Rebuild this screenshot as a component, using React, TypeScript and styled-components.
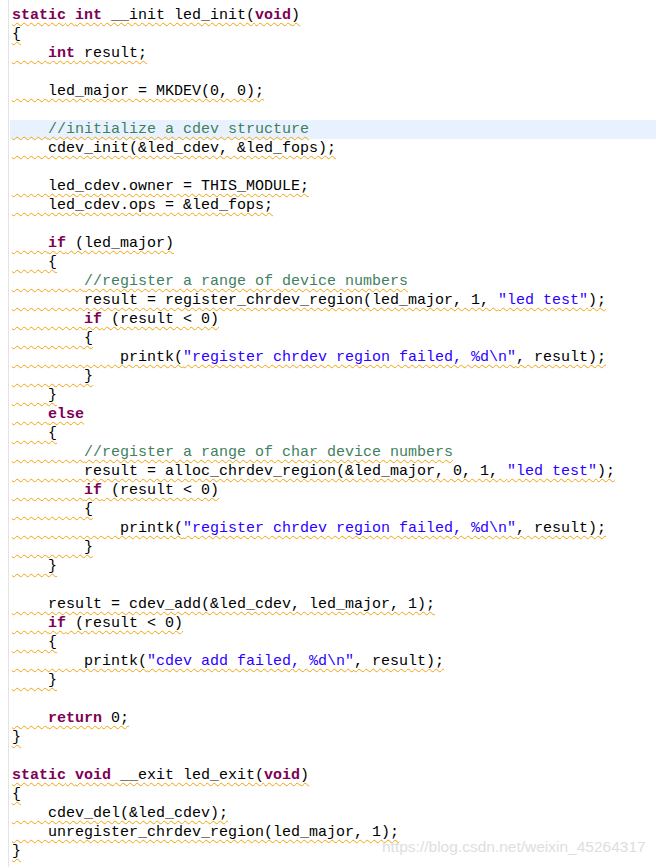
import React from "react"
import styled, { createGlobalStyle } from "styled-components"

const GlobalStyle = createGlobalStyle`
  html, body {
    margin: 0;
    padding: 0;
    background: #ffffff;
  }
`

const EditorFrame = styled.div`
  position: relative;
  width: 656px;
  height: 867px;
  overflow: hidden;
  background: #ffffff;
`

const Gutter = styled.div`
  margin-left: 8px;
  height: 100%;
  border-left: 1px solid #e4e4e4;
  padding-top: 6px;
  box-sizing: border-box;
`

const CodeLine = styled.div<{ $current?: boolean }>`
  height: 19px;
  line-height: 19px;
  margin-left: 1px;
  padding-left: 2px;
  white-space: pre;
  font-family: "Liberation Mono", "DejaVu Sans Mono", monospace;
  font-size: 15px;
  color: #000000;
  background: ${(p) => (p.$current ? "#e8f2fe" : "transparent")};
`

const Squiggle = styled.span`
  text-decoration-line: underline;
  text-decoration-style: wavy;
  text-decoration-color: #f2a30c;
  text-decoration-thickness: 0.7px;
  text-underline-offset: 3px;
`

const Keyword = styled.span`
  color: #7f0055;
  font-weight: bold;
`

const StringLit = styled.span`
  color: #2a00ff;
`

const Comment = styled.span`
  color: #3f7f5f;
`

const Watermark = styled.div`
  position: absolute;
  left: 382px;
  top: 838px;
  font-family: "Liberation Sans", Arial, sans-serif;
  font-size: 15.5px;
  color: #dedede;
  white-space: nowrap;
`

const source = `static int __init led_init(void)
{
    int result;

    led_major = MKDEV(0, 0);

    //initialize a cdev structure
    cdev_init(&led_cdev, &led_fops);

    led_cdev.owner = THIS_MODULE;
    led_cdev.ops = &led_fops;

    if (led_major)
    {
        //register a range of device numbers
        result = register_chrdev_region(led_major, 1, "led test");
        if (result < 0)
        {
            printk("register chrdev region failed, %d\\n", result);
        }
    }
    else
    {
        //register a range of char device numbers
        result = alloc_chrdev_region(&led_major, 0, 1, "led test");
        if (result < 0)
        {
            printk("register chrdev region failed, %d\\n", result);
        }
    }

    result = cdev_add(&led_cdev, led_major, 1);
    if (result < 0)
    {
        printk("cdev add failed, %d\\n", result);
    }

    return 0;
}

static void __exit led_exit(void)
{
    cdev_del(&led_cdev);
    unregister_chrdev_region(led_major, 1);
}`

const CURRENT_LINE = 6

const tokenRe = /("(?:[^"\\]|\\.)*")|\b(static|int|void|if|else|return)\b/g

function highlight(line: string) {
  const trimmed = line.trimStart()
  if (trimmed.startsWith("//")) {
    const indent = line.slice(0, line.length - trimmed.length)
    return [indent, <Comment key="c">{trimmed}</Comment>]
  }
  const parts: React.ReactNode[] = []
  let last = 0
  let m: RegExpExecArray | null
  tokenRe.lastIndex = 0
  while ((m = tokenRe.exec(line))) {
    if (m.index > last) parts.push(line.slice(last, m.index))
    if (m[1]) parts.push(<StringLit key={m.index}>{m[1]}</StringLit>)
    else parts.push(<Keyword key={m.index}>{m[2]}</Keyword>)
    last = m.index + m[0].length
  }
  if (last < line.length) parts.push(line.slice(last))
  return parts
}

export default function App() {
  const lines = source.split("\n")
  return (
    <EditorFrame>
      <GlobalStyle />
      <Gutter>
        {lines.map((line, i) => (
          <CodeLine key={i} $current={i === CURRENT_LINE}>
            {line.length > 0 ? <Squiggle>{highlight(line)}</Squiggle> : " "}
          </CodeLine>
        ))}
      </Gutter>
      <Watermark>https://blog.csdn.net/weixin_45264317</Watermark>
    </EditorFrame>
  )
}
